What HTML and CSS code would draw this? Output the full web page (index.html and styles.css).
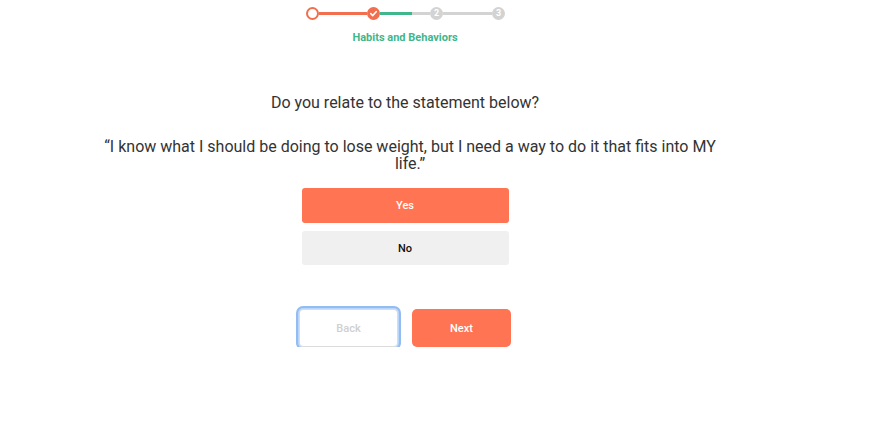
FILE: index.html
```html
<!DOCTYPE html>
<html>
<head>
<meta charset="utf-8">
<link rel="stylesheet" href="styles.css">
</head>
<body>
<div class="page">
  <div class="stepper">
    <div class="steps">
      <span class="dot dot-open"></span>
      <span class="line line-orange"></span>
      <span class="dot dot-done">
        <svg width="9" height="9" viewBox="0 0 10 10"><path d="M2 5.2 L4.2 7.3 L8 3" fill="none" stroke="#fff" stroke-width="1.8" stroke-linecap="round" stroke-linejoin="round"/></svg>
      </span>
      <span class="line line-split"></span>
      <span class="dot dot-todo">2</span>
      <span class="line line-gray"></span>
      <span class="dot dot-todo">3</span>
    </div>
    <div class="step-label">Habits and Behaviors</div>
  </div>

  <h1 class="question">Do you relate to the statement below?</h1>
  <p class="quote">“I know what I should be doing to lose weight, but I need a way to do it that fits into MY life.”</p>

  <div class="options">
    <button class="option option-yes">Yes</button>
    <button class="option option-no">No</button>
  </div>

  <div class="nav">
    <button class="nav-btn nav-back">Back</button>
    <button class="nav-btn nav-next">Next</button>
  </div>
</div>
</body>
</html>
```
FILE: styles.css
```css
* { box-sizing: border-box; }
html, body { margin: 0; padding: 0; background: #fff; }
body { font-family: Roboto, "Liberation Sans", Arial, sans-serif; color: #333; }

.page {
  width: 810px;
  display: flex;
  flex-direction: column;
  align-items: center;
  padding-top: 7px;
}

.stepper { display: flex; flex-direction: column; align-items: center; }
.steps { display: flex; align-items: center; padding-left: 1px; }
.dot {
  width: 13px; height: 13px; border-radius: 50%;
  display: flex; align-items: center; justify-content: center;
  flex: none;
}
.dot-open { border: 2px solid #f26e4d; background: #fff; }
.dot-done { background: #f26e4d; }
.dot-todo {
  background: #d3d3d3; color: #fff; font-size: 9px; font-weight: 700; line-height: 1;
}
.line { height: 3px; width: 49px; flex: none; }
.line-orange { background: #f26e4d; width: 48px; }
.line-split { background: linear-gradient(to right, #3fb68b 0, #3fb68b 32px, #d3d3d3 32px); width: 50px; }
.line-gray { background: #d3d3d3; }

.step-label {
  margin-top: 11px;
  font-size: 11px;
  font-weight: 700;
  color: #3fb68b;
}

.question {
  margin: 49px 0 0;
  font-size: 16px;
  font-weight: 400;
  color: #333;
  line-height: 20px;
}

.quote {
  margin: 25px 0 0;
  width: 640px;
  text-align: center;
  font-size: 16px;
  line-height: 17px;
  color: #333;
  padding-left: 10px;
}

.options {
  margin-top: 16px;
  display: flex;
  flex-direction: column;
  gap: 8px;
}
.option {
  width: 207px;
  height: 35px;
  border: none;
  border-radius: 3px;
  font-family: inherit;
  font-size: 11px;
  font-weight: 500;
}
.option-yes { background: #ff7452; color: #fff; }
.option-no { background: #f0f0f0; color: #111; height: 34px; }

.nav {
  margin-top: 44px;
  display: flex;
  gap: 14px;
}
.nav-btn {
  width: 99px;
  height: 38px;
  border-radius: 5px;
  font-family: inherit;
  font-size: 11px;
  font-weight: 500;
}
.nav-back {
  background: #fff;
  border: 1px solid #dcdcdc;
  color: #cfcfcf;
  box-shadow: 0 0 0 1px #b9d5f7, 0 0 0 3px #93bdf2;
  border-radius: 4px;
}
.nav-next { background: #ff7452; color: #fff; border: none; }
```
